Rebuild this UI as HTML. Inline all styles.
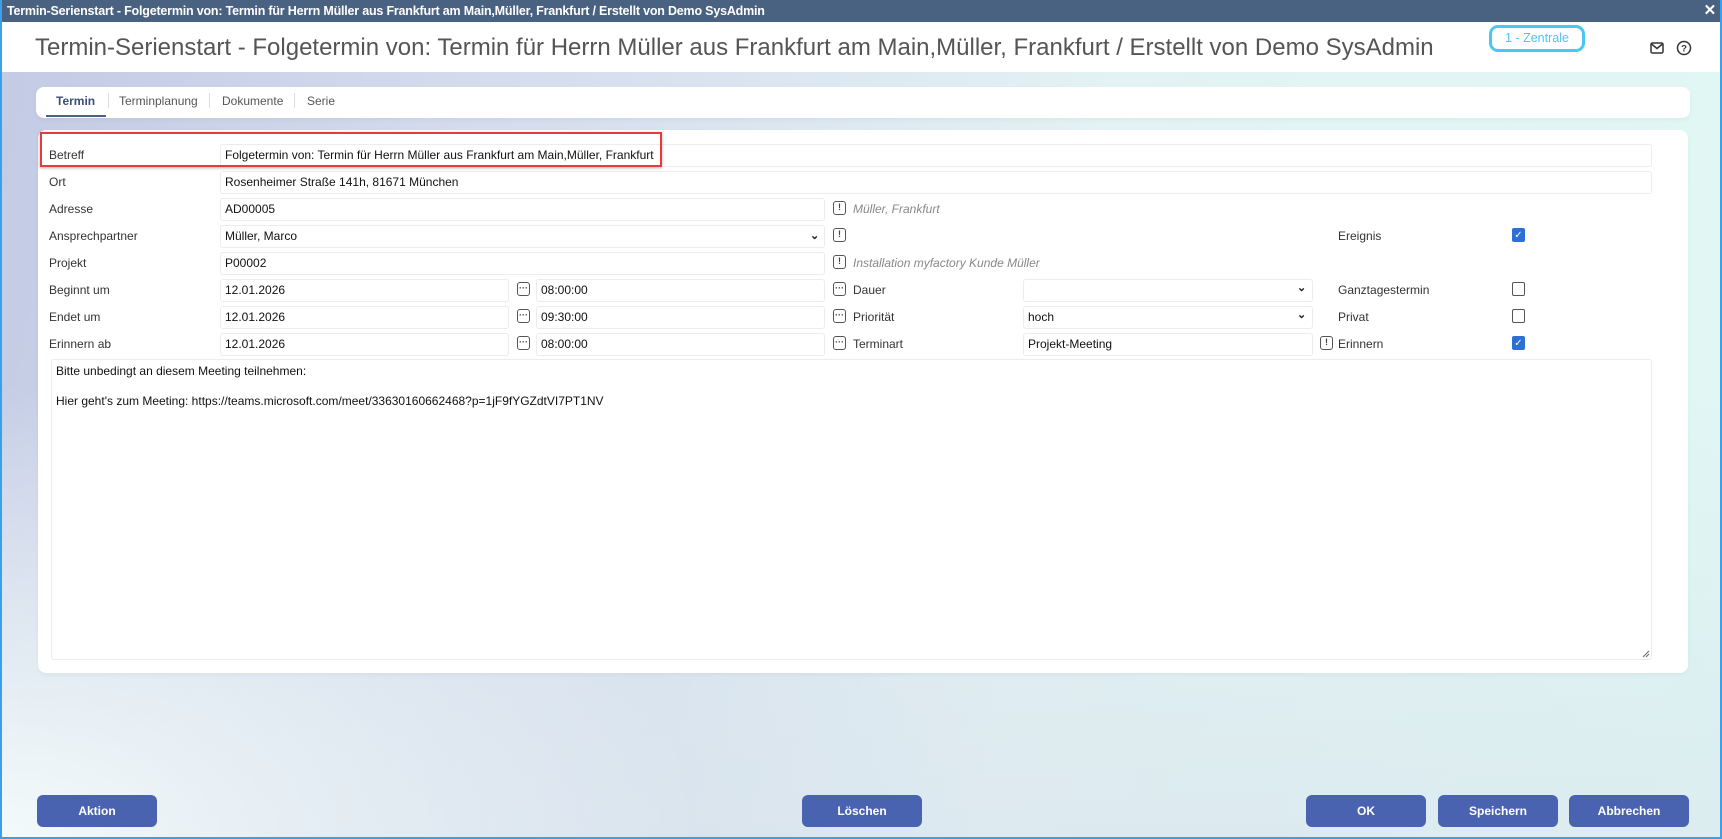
<!DOCTYPE html>
<html><head><meta charset="utf-8"><style>
*{box-sizing:border-box;margin:0;padding:0}
body{width:1722px;height:839px;overflow:hidden;font-family:"Liberation Sans",Arial,sans-serif;position:relative;background:#fff}
.win{position:absolute;left:0;top:0;width:1722px;height:839px;border:2px solid #3ba0e8;border-top:none;overflow:hidden}
.tb{position:absolute;left:0;top:0;width:1722px;height:22px;background:#4a6282;color:#fff;font-weight:bold;font-size:12.5px;line-height:22px;padding-left:5px;letter-spacing:-0.2px}
.tb .x{position:absolute;right:8px;top:0;font-size:15px}
.hdr{position:absolute;left:0;top:22px;width:1722px;height:50px;background:#fff}
.bg{position:absolute;left:0;top:72px;width:1722px;height:767px;background:radial-gradient(ellipse 700px 450px at 0% 100%,rgba(242,250,250,1),rgba(242,250,250,0)),linear-gradient(180deg,rgba(0,0,0,0) 40%,rgba(215,225,235,.5) 100%),linear-gradient(100deg,#c3cbe5 0%,#d6deee 30%,#e3f2f4 60%,#e0f8f4 100%)}
.title{position:absolute;left:33px;top:34px;font-size:24px;color:#555;white-space:nowrap}
.badge{position:absolute;left:1487px;top:25px;width:96px;height:27px;border:3px solid #4cc6f4;border-radius:9px;color:#4cc6f4;font-size:12.5px;text-align:center;line-height:20px}
.card{position:absolute;background:#fff;border-radius:8px;box-shadow:0 2px 5px rgba(0,0,0,.04)}
.tab{position:absolute;top:12px;font-size:12px;color:#555}
.lbl{position:absolute;font-size:12px;color:#333;white-space:nowrap}
.in{position:absolute;height:23px;border:1px solid #ececec;border-radius:3px;font-size:12px;color:#111;line-height:21px;padding-left:4px;white-space:nowrap;background:#fff}
.ic{position:absolute;width:13px;height:14px;border:1.5px solid #555;border-radius:3px;font-size:9px;font-weight:bold;color:#444;text-align:center;line-height:10px}
.it{position:absolute;font-size:12px;color:#888;font-style:italic;white-space:nowrap}
.cb{position:absolute;width:13px;height:14px;border:1.3px solid #555;border-radius:2px;background:#fff}
.cb.on{background:#2d6fd6;border-color:#2d6fd6;color:#fff;font-size:10px;text-align:center;line-height:13px}
.chev{position:absolute;font-size:11px;color:#222;font-weight:bold}
.btn{position:absolute;top:795px;height:32px;width:120px;background:#4a63b0;border-radius:6px;color:#fff;font-size:12px;font-weight:bold;text-align:center;line-height:32px}
</style></head><body>
<div class="win">
<div class="bg"></div>
<div class="tb">Termin-Serienstart - Folgetermin von: Termin für Herrn Müller aus Frankfurt am Main,Müller, Frankfurt / Erstellt von Demo SysAdmin<span class="x">✕</span></div>
<div class="hdr"></div>
<div class="title">Termin-Serienstart - Folgetermin von: Termin für Herrn Müller aus Frankfurt am Main,Müller, Frankfurt / Erstellt von Demo SysAdmin</div>
<div class="badge">1 - Zentrale</div>
<svg style="position:absolute;left:1648px;top:42px" width="14" height="12" viewBox="0 0 14 12"><rect x="1" y="1" width="12" height="10" rx="1.5" fill="none" stroke="#333" stroke-width="1.5"/><path d="M1.5 2 L7 6.5 L12.5 2" fill="none" stroke="#333" stroke-width="1.5"/></svg>
<svg style="position:absolute;left:1674px;top:40px" width="16" height="16" viewBox="0 0 16 16"><circle cx="8" cy="8" r="6.5" fill="none" stroke="#333" stroke-width="1.5"/><text x="8" y="11.5" font-size="9.5" font-weight="bold" text-anchor="middle" fill="#333" font-family="Liberation Sans">?</text></svg>

<div class="card" style="left:34px;top:87px;width:1654px;height:31px"></div>
<div class="tab" style="left:54px;top:94px;color:#3a4f74;font-weight:bold">Termin</div>
<div style="position:absolute;left:44px;top:115px;width:60px;height:2px;background:#4a6282"></div>
<div style="position:absolute;left:106px;top:93px;width:1px;height:15px;background:#ddd"></div>
<div class="tab" style="left:117px;top:94px">Terminplanung</div>
<div style="position:absolute;left:207px;top:93px;width:1px;height:15px;background:#ddd"></div>
<div class="tab" style="left:220px;top:94px">Dokumente</div>
<div style="position:absolute;left:292px;top:93px;width:1px;height:15px;background:#ddd"></div>
<div class="tab" style="left:305px;top:94px">Serie</div>

<div class="card" style="left:36px;top:130px;width:1650px;height:543px"></div>

<div class="lbl" style="left:47px;top:148px">Betreff</div>
<div class="in" style="left:218px;top:144px;width:1432px">Folgetermin von: Termin für Herrn Müller aus Frankfurt am Main,Müller, Frankfurt</div>
<div style="position:absolute;left:38px;top:132px;width:622px;height:35px;border:2.5px solid #e8393d;box-shadow:0 1px 3px rgba(0,0,0,.3)"></div>
<div class="lbl" style="left:47px;top:175px">Ort</div>
<div class="in" style="left:218px;top:171px;width:1432px">Rosenheimer Straße 141h, 81671 München</div>
<div class="lbl" style="left:47px;top:202px">Adresse</div>
<div class="in" style="left:218px;top:198px;width:605px">AD00005</div>
<div class="ic" style="left:831px;top:201px">!</div><div class="it" style="left:851px;top:202px">Müller, Frankfurt</div>
<div class="lbl" style="left:47px;top:229px">Ansprechpartner</div>
<div class="in" style="left:218px;top:225px;width:605px">Müller, Marco</div><div class="chev" style="left:808px;top:229px">⌄</div>
<div class="ic" style="left:831px;top:228px">!</div>
<div class="lbl" style="left:1336px;top:229px">Ereignis</div><div class="cb on" style="left:1510px;top:228px">✓</div>
<div class="lbl" style="left:47px;top:256px">Projekt</div>
<div class="in" style="left:218px;top:252px;width:605px">P00002</div>
<div class="ic" style="left:831px;top:255px">!</div><div class="it" style="left:851px;top:256px">Installation myfactory Kunde Müller</div>

<div class="lbl" style="left:47px;top:283px">Beginnt um</div>
<div class="in" style="left:218px;top:279px;width:289px">12.01.2026</div><div class="ic" style="left:515px;top:282px">···</div>
<div class="in" style="left:534px;top:279px;width:289px">08:00:00</div><div class="ic" style="left:831px;top:282px">···</div>
<div class="lbl" style="left:851px;top:283px">Dauer</div>
<div class="in" style="left:1021px;top:279px;width:290px"></div><div class="chev" style="left:1295px;top:281px">⌄</div>
<div class="lbl" style="left:1336px;top:283px">Ganztagestermin</div><div class="cb" style="left:1510px;top:282px"></div>

<div class="lbl" style="left:47px;top:310px">Endet um</div>
<div class="in" style="left:218px;top:306px;width:289px">12.01.2026</div><div class="ic" style="left:515px;top:309px">···</div>
<div class="in" style="left:534px;top:306px;width:289px">09:30:00</div><div class="ic" style="left:831px;top:309px">···</div>
<div class="lbl" style="left:851px;top:310px">Priorität</div>
<div class="in" style="left:1021px;top:306px;width:290px">hoch</div><div class="chev" style="left:1295px;top:308px">⌄</div>
<div class="lbl" style="left:1336px;top:310px">Privat</div><div class="cb" style="left:1510px;top:309px"></div>

<div class="lbl" style="left:47px;top:337px">Erinnern ab</div>
<div class="in" style="left:218px;top:333px;width:289px">12.01.2026</div><div class="ic" style="left:515px;top:336px">···</div>
<div class="in" style="left:534px;top:333px;width:289px">08:00:00</div><div class="ic" style="left:831px;top:336px">···</div>
<div class="lbl" style="left:851px;top:337px">Terminart</div>
<div class="in" style="left:1021px;top:333px;width:290px">Projekt-Meeting</div>
<div class="ic" style="left:1318px;top:336px">!</div>
<div class="lbl" style="left:1336px;top:337px">Erinnern</div><div class="cb on" style="left:1510px;top:336px">✓</div>

<div style="position:absolute;left:49px;top:359px;width:1601px;height:301px;border:1px solid #ececec;border-radius:3px;font-size:12px;color:#111;padding:4px 4px;line-height:15px">Bitte unbedingt an diesem Meeting teilnehmen:<br><br>Hier geht's zum Meeting: https://teams.microsoft.com/meet/33630160662468?p=1jF9fYGZdtVI7PT1NV</div>
<svg style="position:absolute;left:1640px;top:650px" width="8" height="8"><path d="M1 7 L7 1 M4 7 L7 4" stroke="#666" stroke-width="1"/></svg>

<div class="btn" style="left:35px">Aktion</div>
<div class="btn" style="left:800px">Löschen</div>
<div class="btn" style="left:1304px">OK</div>
<div class="btn" style="left:1436px">Speichern</div>
<div class="btn" style="left:1567px">Abbrechen</div>
</div>
</body></html>
